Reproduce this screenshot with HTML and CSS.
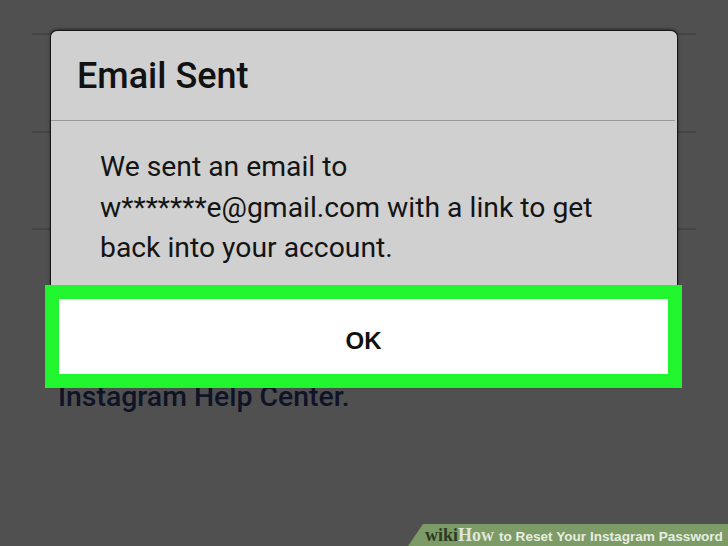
FILE: index.html
```html
<!DOCTYPE html>
<html lang="en">

<head>
  <meta charset="UTF-8">
  <meta name="viewport" content="width=device-width, initial-scale=1.0">
  <title>Email Sent</title>
  <link rel="stylesheet" href="styles.css">
</head>

<body>
  <div id="screen">
    <!-- page behind the dialog -->
    <ul class="list">
      <li class="list__row list__row--first"></li>
      <li class="list__row list__row--second"></li>
      <li class="list__row list__row--third"></li>
    </ul>
    <p class="help">Instagram Help Center.</p>

    <!-- dialog -->
    <div class="dialog">
      <div class="dialog__title">Email Sent</div>
      <div class="dialog__body">We sent an email to w*******e@gmail.com with a link to get back into your account.</div>
      <button class="btn btn__ok">OK</button>
    </div>

    <div class="watermark">
      <span class="watermark__wiki">wiki</span><span class="watermark__how">How</span>
      <span class="watermark__text">to Reset Your Instagram Password</span>
    </div>
  </div>
</body>

</html>
```

FILE: styles.css
```css
html,
body {
  margin: 0;
  padding: 0;
}

body {
  background: #505050;
  font-family: Roboto, "Liberation Sans", sans-serif;
}

#screen {
  position: relative;
  width: 728px;
  height: 546px;
  overflow: hidden;
}

ul {
  margin: 0;
  padding: 0;
}

ul,
li {
  list-style: none;
}

/* background list */
.list {
  padding: 0 32px;
}

.list__row {
  border-bottom: 2px solid #444;
}

.list__row--first {
  height: 33px;
}

.list__row--second {
  height: 96px;
}

.list__row--third {
  height: 95px;
}

.help {
  margin: 150px 0 0 58px;
  font-size: 28.4px;
  font-weight: 500;
  line-height: 33px;
  color: #0e1326;
}

/* dialog */
.dialog {
  position: absolute;
  top: 30px;
  left: 50px;
  width: 626px;
  background: #d0d0d0;
  border: 1px solid #161616;
  border-bottom: none;
  border-radius: 7px 7px 0 0;
  box-shadow: 0 -1px 3px rgba(0, 0, 0, .45);
}

.dialog__title {
  margin-right: 2px;
  padding: 23px 26px 22px;
  font-size: 36px;
  font-weight: 500;
  line-height: 44px;
  color: #121212;
  border-bottom: 1px solid #9a9a9a;
}

.dialog__body {
  padding: 26px 49px 16px;
  font-size: 28.3px;
  line-height: 40.5px;
  color: #141414;
}

.btn {
  display: block;
  font-family: "Liberation Sans", Arial, sans-serif;
}

.btn__ok {
  box-sizing: border-box;
  width: 637px;
  height: 103px;
  margin: 0 -5px 0 -6px;
  padding: 8px 0 0;
  background: #fff;
  border: 14px solid #20f52e;
  font-size: 24px;
  font-weight: bold;
  line-height: 67px;
  color: #111;
  text-align: center;
}

/* wikihow band */
.watermark {
  position: absolute;
  right: 0;
  bottom: 0;
  width: 320px;
  height: 22px;
  padding-left: 17px;
  box-sizing: border-box;
  background: #7d9b66;
  clip-path: polygon(15px 0, 100% 0, 100% 100%, 0 100%);
  display: flex;
  align-items: baseline;
  line-height: 22px;
  white-space: nowrap;
}

.watermark__wiki,
.watermark__how {
  font-family: "Liberation Serif", serif;
  font-weight: bold;
  font-size: 18px;
}

.watermark__wiki {
  color: #2d3a24;
}

.watermark__how {
  margin-right: 5px;
  color: #dfe6d6;
}

.watermark__text {
  font-family: "Liberation Sans", Arial, sans-serif;
  font-weight: bold;
  font-size: 13.6px;
  color: #e8ede2;
}
```
